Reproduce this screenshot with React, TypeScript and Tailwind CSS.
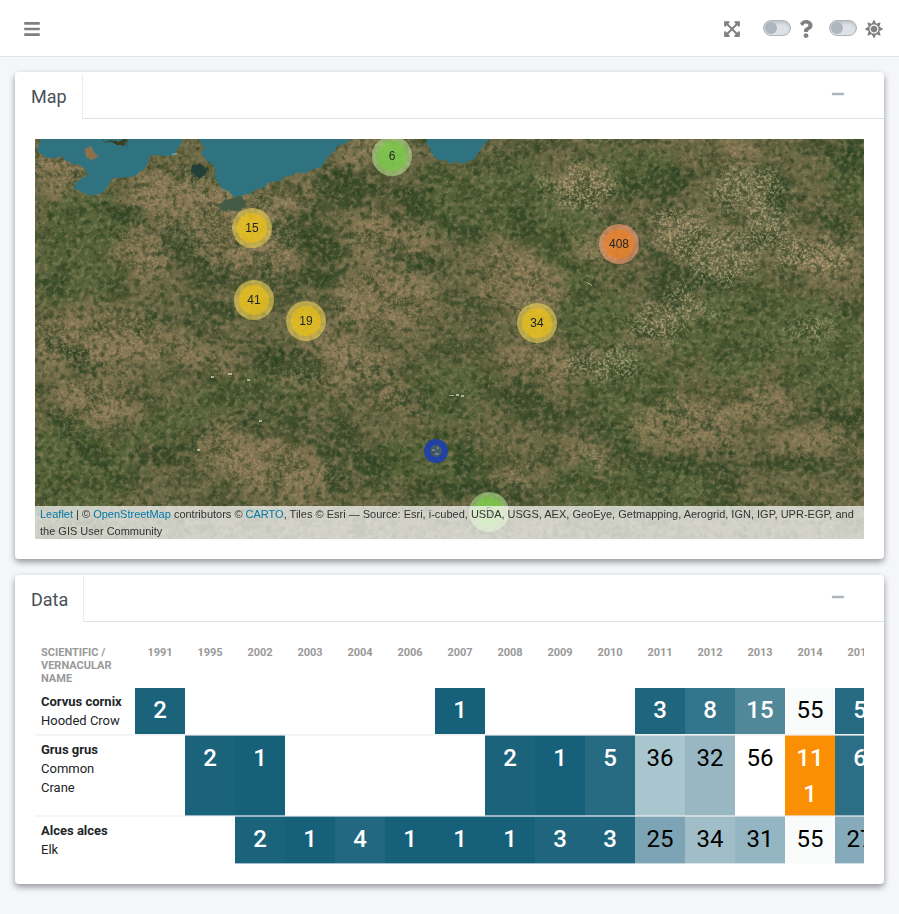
import React from "react";
import { FaBars, FaExpandArrowsAlt, FaMinus, FaQuestion, FaSun } from "react-icons/fa";

type Size = "small" | "medium" | "large";
type Blob = [number, number, number, number, number];

const clusters: { count: number; x: number; y: number; size: Size }[] = [
  { count: 6, x: 357, y: 17, size: "small" },
  { count: 15, x: 217, y: 89, size: "medium" },
  { count: 41, x: 219, y: 161, size: "medium" },
  { count: 19, x: 271, y: 182, size: "medium" },
  { count: 34, x: 502, y: 184, size: "medium" },
  { count: 408, x: 584, y: 105, size: "large" },
  { count: 5, x: 454, y: 373, size: "small" },
];

const ringClass: Record<Size, string> = {
  small: "bg-[rgba(181,226,140,0.6)]",
  medium: "bg-[rgba(241,211,87,0.6)]",
  large: "bg-[rgba(253,156,115,0.6)]",
};

const discClass: Record<Size, string> = {
  small: "bg-[rgba(110,204,57,0.6)]",
  medium: "bg-[rgba(240,194,12,0.6)]",
  large: "bg-[rgba(241,128,23,0.6)]",
};

// Terrain patches: centre x, centre y, radius x, radius y, rotation.
const fields: Blob[] = [
  [20, 30, 34, 26, 10], [140, 60, 48, 34, 20], [190, 100, 42, 34, 30], [170, 50, 34, 20, 20],
  [240, 110, 26, 30, 0], [338, 95, 24, 24, 0], [378, 98, 18, 18, 0], [240, 60, 44, 14, -15],
  [350, 160, 54, 34, 0], [330, 12, 26, 12, -30], [110, 115, 30, 24, 20], [60, 200, 70, 30, 0],
  [60, 265, 44, 26, 10], [140, 210, 60, 12, 15], [240, 330, 60, 26, 10], [320, 220, 50, 18, 25],
  [350, 250, 40, 12, 30], [485, 140, 46, 30, 20], [560, 110, 30, 12, 10], [640, 90, 20, 16, 0],
  [550, 40, 30, 16, 0], [500, 225, 40, 14, 10], [650, 285, 54, 26, 0], [730, 265, 34, 16, 0],
  [770, 300, 44, 10, 0], [480, 335, 24, 12, -10], [790, 120, 34, 20, 20], [700, 10, 20, 12, 0],
  [180, 300, 30, 14, -20], [560, 315, 30, 8, 20], [280, 240, 40, 10, 10],
];

const woods: Blob[] = [
  [155, 35, 9, 8, 0], [310, 50, 30, 20, 10], [262, 95, 28, 16, 10], [290, 108, 24, 12, 20],
  [380, 66, 20, 16, 40], [367, 95, 4, 22, 0], [150, 110, 34, 15, 40], [175, 130, 34, 10, 20],
  [90, 78, 34, 5, 15], [235, 138, 18, 7, -10], [280, 140, 32, 9, -8], [375, 122, 36, 7, 10],
  [25, 208, 14, 10, 20], [48, 222, 20, 9, 15], [30, 285, 24, 7, 42], [60, 315, 22, 10, 35],
  [250, 226, 36, 13, 10], [265, 285, 24, 9, 20], [220, 280, 28, 8, -10], [130, 315, 36, 8, -15],
  [170, 296, 30, 4, -28], [310, 298, 30, 7, 52], [334, 325, 26, 12, 45], [295, 325, 9, 26, -15],
  [470, 20, 12, 6, -10], [610, 45, 30, 10, -10], [640, 50, 22, 8, -50], [745, 55, 16, 18, 20],
  [490, 80, 18, 12, 30], [620, 115, 16, 10, 30], [632, 148, 18, 16, 0], [660, 140, 36, 8, 20],
  [488, 257, 18, 16, 20], [510, 270, 24, 6, 10], [430, 165, 26, 5, 20], [635, 272, 14, 9, 0],
  [665, 284, 24, 5, 20], [660, 325, 46, 8, 6], [690, 345, 18, 8, 10], [620, 345, 22, 7, 35],
  [766, 325, 48, 5, 2], [800, 275, 32, 8, 25],
  [345, 240, 28, 8, 28], [380, 262, 24, 6, 30], [555, 290, 30, 4, 10], [580, 305, 24, 5, 40],
  [432, 320, 12, 18, 0], [440, 350, 60, 9, 0], [815, 20, 18, 16, 0], [800, 90, 24, 8, 40],
  [15, 145, 20, 9, 0], [120, 180, 28, 7, 12], [175, 170, 24, 10, 15], [430, 90, 20, 8, 20],
];

const greens: Blob[] = [
  [50, 90, 44, 44, 0], [30, 140, 56, 24, 0], [405, 60, 22, 40, -15], [470, 60, 60, 40, 0],
  [540, 110, 40, 40, 0], [590, 30, 50, 20, 0], [600, 260, 50, 50, 0], [560, 180, 40, 30, 0],
  [740, 170, 80, 24, 10], [800, 215, 50, 50, 0], [690, 200, 60, 30, 0], [600, 350, 90, 30, 0],
  [400, 325, 60, 30, 0], [820, 40, 24, 50, 0], [40, 330, 60, 50, 0], [150, 280, 60, 20, -20],
  [420, 250, 40, 30, 0], [230, 250, 60, 16, 0], [700, 225, 30, 24, 10], [800, 230, 40, 32, 10],
];

const brightFields: Blob[] = [
  [640, 90, 24, 24, 30], [680, 115, 46, 30, 20], [735, 90, 26, 24, 40], [755, 115, 20, 20, 0],
  [625, 185, 34, 22, 0], [660, 165, 34, 10, 20], [710, 50, 40, 24, 0], [545, 50, 36, 24, 0],
  [775, 190, 34, 10, 0], [560, 322, 22, 7, 30], [570, 225, 40, 18, 0], [800, 120, 28, 18, 10],
];

function Patches({ items, fill }: { items: Blob[]; fill: string }) {
  return (
    <>
      {items.map(([x, y, rx, ry, turn], i) => (
        <ellipse key={i} cx={x} cy={y} rx={rx} ry={ry} fill={fill} transform={`rotate(${turn} ${x} ${y})`} />
      ))}
    </>
  );
}

function SatelliteImage() {
  return (
    <svg className="block h-full w-full" viewBox="0 0 829 400" preserveAspectRatio="xMidYMid slice" aria-hidden="true">
      <defs>
        <filter id="soft" x="0" y="0" width="829" height="400" filterUnits="userSpaceOnUse" colorInterpolationFilters="sRGB">
          <feTurbulence type="fractalNoise" baseFrequency="0.07" numOctaves="5" seed="4" result="n" />
          <feDisplacementMap in="SourceGraphic" in2="n" scale="60" xChannelSelector="R" yChannelSelector="G" />
          <feGaussianBlur stdDeviation="4" />
        </filter>
        <filter id="rough" x="0" y="0" width="829" height="400" filterUnits="userSpaceOnUse" colorInterpolationFilters="sRGB">
          <feTurbulence type="fractalNoise" baseFrequency="0.11" numOctaves="4" seed="4" result="n" />
          <feDisplacementMap in="SourceGraphic" in2="n" scale="44" xChannelSelector="R" yChannelSelector="G" />
          <feGaussianBlur stdDeviation="1" />
        </filter>
        <filter id="coast" x="0" y="0" width="829" height="400" filterUnits="userSpaceOnUse" colorInterpolationFilters="sRGB">
          <feTurbulence type="fractalNoise" baseFrequency="0.12" numOctaves="3" seed="9" result="n" />
          <feDisplacementMap in="SourceGraphic" in2="n" scale="7" xChannelSelector="R" yChannelSelector="G" />
        </filter>
        <filter id="speckled" x="0" y="0" width="829" height="400" filterUnits="userSpaceOnUse" colorInterpolationFilters="sRGB">
          <feTurbulence type="fractalNoise" baseFrequency="0.07" numOctaves="4" seed="12" result="n" />
          <feDisplacementMap in="SourceGraphic" in2="n" scale="50" xChannelSelector="R" yChannelSelector="G" result="d" />
          <feGaussianBlur in="d" stdDeviation="4" result="b" />
          <feTurbulence type="fractalNoise" baseFrequency="0.38" numOctaves="3" seed="31" />
          <feColorMatrix values="0 0 0 0 1  0 0 0 0 1  0 0 0 0 1  5 0 0 0 -2.3" result="s" />
          <feComposite in="b" in2="s" operator="in" />
        </filter>
        <filter id="grainLight" x="0" y="0" width="829" height="400" filterUnits="userSpaceOnUse" colorInterpolationFilters="sRGB">
          <feTurbulence type="fractalNoise" baseFrequency="0.22" numOctaves="4" seed="2" />
          <feColorMatrix values="0 0 0 0 0.64  0 0 0 0 0.57  0 0 0 0 0.43  4 0 0 0 -1.9" />
        </filter>
        <filter id="grainDark" x="0" y="0" width="829" height="400" filterUnits="userSpaceOnUse" colorInterpolationFilters="sRGB">
          <feTurbulence type="fractalNoise" baseFrequency="0.16" numOctaves="5" seed="17" />
          <feColorMatrix values="0 0 0 0 0.15  0 0 0 0 0.24  0 0 0 0 0.12  0 4 0 0 -1.9" />
        </filter>
        <filter id="mottle" x="0" y="0" width="829" height="400" filterUnits="userSpaceOnUse" colorInterpolationFilters="sRGB">
          <feTurbulence type="fractalNoise" baseFrequency="0.03 0.045" numOctaves="6" seed="23" />
          <feColorMatrix values="0 0 0 0 0.2  0 0 0 0 0.27  0 0 0 0 0.13  0 5 0 0 -2.4" />
        </filter>
      </defs>
      <rect width="829" height="400" fill="#6b6845" />
      <g filter="url(#soft)" opacity="0.6">
        <Patches items={greens} fill="#4b6334" />
      </g>
      <g filter="url(#soft)" opacity="0.6">
        <Patches items={fields} fill="#927e5a" />
      </g>
      <rect width="829" height="400" filter="url(#mottle)" opacity="0.5" />
      <g filter="url(#rough)" opacity="0.75">
        <Patches items={woods} fill="#304626" />
      </g>
      <g filter="url(#coast)" fill="none" stroke="#414b2c" strokeWidth="2" opacity="0.7">
        <path d="M450 155 L485 172 L510 178 L545 187 L575 205 L590 235" />
        <path d="M85 345 L110 322 L155 302 L182 282 L205 272" />
        <path d="M728 275 L722 230 L745 200 L785 190 L829 195" stroke="#6b7445" />
      </g>
      <g filter="url(#speckled)" opacity="0.6">
        <Patches items={brightFields} fill="#c7c19c" />
      </g>
      <g filter="url(#speckled)" opacity="0.45">
        <Patches items={fields} fill="#b99c78" />
      </g>
      <rect width="829" height="400" filter="url(#grainDark)" opacity="0.55" />
      <rect width="829" height="400" filter="url(#grainLight)" opacity="0.4" />
      <g filter="url(#coast)">
        <path
          fill="#2f7380"
          d="M4 -8 L4 14 L12 19 L25 18 L36 25 L50 29 L52 36 L42 42 L40 50 L52 56 L66 55 L72 46 L80 40 L101 37 L110 28 L116 16 L138 17 L144 6 L152 -8 Z"
        />
        <path
          fill="#2f7380"
          d="M156 -8 L170 8 L167 16 L174 22 L182 31 L180 40 L190 50 L200 59 L212 55 L242 42 L284 28 L292 20 L302 10 L326 -8 Z"
        />
        <path fill="#2f7380" d="M391 -8 L395 14 L404 21 L418 25 Q444 24 458 -8 Z" />
        <path fill="#39401f" d="M68 0 L78 2 L92 0 L91 7 L80 5 Z" />
        <path fill="#8a704b" d="M49 10 L58 9 L63 17 L58 20 L53 19 Z" />
        <path fill="#243f37" d="M156 27 L164 23 L172 32 L166 39 L157 36 Z" />
        <path fill="#435a45" d="M180 64 L195 60 L206 58 L212 68 L190 73 Z" />
      </g>
      <g fill="#dfd8c6" opacity="0.7">
        <path d="M414 256h5v1h-5zM421 255h3v2h-3zM426 256h3v2h-3z" />
        <path d="M193 234h4v2h-4zM212 240h3v2h-3zM176 237h3v2h-3zM224 281h3v2h-3zM162 310h3v2h-3z" />
        <path d="M552 143l5 3v1l-5 -3zM137 15l5 -1v1l-5 1z" />
      </g>
      <circle cx="401" cy="312" r="9" fill="#3b5870" fillOpacity="0.75" stroke="#1d3fae" strokeOpacity="0.9" strokeWidth="6" />
      <path d="M397 310h3v2h-3zM402 308h2v2h-2zM400 314h4v2h-4z" fill="#73808a" />
    </svg>
  );
}

const linkClass = "text-[#0078a8]";

function SpeciesMap() {
  return (
    <div className="relative h-[400px] overflow-hidden font-['Liberation_Sans',Arial,sans-serif]">
      <SatelliteImage />
      {clusters.map((c) => (
        <button
          key={c.count}
          type="button"
          className={`absolute flex size-10 -translate-x-1/2 -translate-y-1/2 items-center justify-center rounded-full ${ringClass[c.size]}`}
          style={{ left: c.x, top: c.y }}
        >
          <span className={`flex size-[30px] items-center justify-center rounded-full text-xs text-[#212529] ${discClass[c.size]}`}>
            {c.count}
          </span>
        </button>
      ))}
      <div className="absolute inset-x-0 bottom-0 bg-white/70 px-[5px] text-[11px] leading-normal text-[#333]">
        <a href="#leaflet" className={linkClass}>Leaflet</a> | © <a href="#osm" className={linkClass}>OpenStreetMap</a>
        {" contributors © "}
        <a href="#carto" className={linkClass}>CARTO</a>
        , Tiles © Esri — Source: Esri, i-cubed, USDA, USGS, AEX, GeoEye, Getmapping, Aerogrid, IGN, IGP, UPR-EGP, and the GIS User Community
      </div>
    </div>
  );
}

const years = [1991, 1995, 2002, 2003, 2004, 2006, 2007, 2008, 2009, 2010, 2011, 2012, 2013, 2014, 2015];

const species: { name: string; common: string; counts: (number | null)[] }[] = [
  { name: "Corvus cornix", common: "Hooded Crow", counts: [2, null, null, null, null, null, 1, null, null, null, 3, 8, 15, 55, 5] },
  { name: "Grus grus", common: "Common Crane", counts: [null, 2, 1, null, null, null, null, 2, 1, 5, 36, 32, 56, 111, 6] },
  { name: "Alces alces", common: "Elk", counts: [null, null, 2, 1, 4, 1, 1, 1, 3, 3, 25, 34, 31, 55, 27] },
];

const heat: Record<number, string> = {
  1: "bg-[#17607a] font-medium text-white",
  2: "bg-[#1b627b] font-medium text-white",
  3: "bg-[#1f657e] font-medium text-white",
  4: "bg-[#236881] font-medium text-white",
  5: "bg-[#276b83] font-medium text-white",
  6: "bg-[#2b6e85] font-medium text-white",
  8: "bg-[#33758a] font-medium text-white",
  15: "bg-[#50889a] font-medium text-white",
  25: "bg-[#7ca4b5] text-black",
  27: "bg-[#85abba] text-black",
  31: "bg-[#94b5c2] text-black",
  32: "bg-[#99b7c3] text-black",
  34: "bg-[#a1bdc8] text-black",
  36: "bg-[#a9c5ce] text-black",
  55: "bg-[#fafcfc] text-black",
  56: "bg-white text-black",
  111: "bg-[#fb8f04] font-medium text-white",
};

const rowLines = ["border-b border-[#f0f0f0]", "border-y border-[#f0f0f0]/60", "border-y border-t-[#f0f0f0]/60 border-b-white/60"];

function SpeciesTable() {
  return (
    <div className="overflow-x-auto [scrollbar-width:none]">
      <table className="w-[850px] table-fixed border-separate border-spacing-0">
        <thead>
          <tr className="align-top text-[11px] leading-[13px] font-bold text-[#999]">
            <th scope="col" className="w-[100px] px-1.5 pt-1 pb-[3px] text-left uppercase">Scientific / Vernacular Name</th>
            {years.map((y) => (
              <th key={y} scope="col" className="w-[50px] px-1.5 pt-1 pb-[3px] text-center">{y}</th>
            ))}
          </tr>
        </thead>
        <tbody>
          {species.map((s, row) => (
            <tr key={s.name} className="align-top">
              <th scope="row" className={`px-1.5 py-1 text-left text-[13px] leading-[19px] font-normal text-[#212529] ${rowLines[row]}`}>
                <span className="block font-bold whitespace-nowrap">{s.name}</span>
                <span className="block">{s.common}</span>
              </th>
              {s.counts.map((n, i) => (
                <td key={years[i]} className={`px-1.5 pt-1 pb-[3px] text-center text-2xl leading-9 break-all ${rowLines[row]} ${n === null ? "" : heat[n]}`}>
                  {n}
                </td>
              ))}
            </tr>
          ))}
        </tbody>
      </table>
    </div>
  );
}

function Card({ title, children }: { title: string; children: React.ReactNode }) {
  return (
    <section className="rounded bg-white shadow-[0_3px_6px_rgba(0,0,0,0.4)]">
      <header className="flex h-[47px] items-stretch pt-0.5">
        <h2 className="flex items-center border-r border-[#e9ecef] pt-px pr-[15px] pl-4 text-lg text-[#495057]">{title}</h2>
        <div className="flex grow items-start justify-end border-b border-[#dee2e6] pr-[39px]">
          <button type="button" aria-label={`Collapse ${title}`} className="pt-[13px] text-sm text-[#adb5bd]">
            <FaMinus />
          </button>
        </div>
      </header>
      <div className="p-5">{children}</div>
    </section>
  );
}

function Switch({ label }: { label: string }) {
  return (
    <input
      type="checkbox"
      aria-label={label}
      className="flex h-4 w-7 appearance-none items-center rounded-full border border-[#adb5bd] bg-[#dee2e6] shadow-[inset_0_2px_3px_rgba(0,0,0,0.15)] before:ml-px before:size-3 before:rounded-full before:bg-[#adb5bd] checked:before:ml-[13px]"
    />
  );
}

export default function App() {
  return (
    <div className="min-h-screen bg-[#f4f6fa] font-[Roboto,sans-serif]">
      <nav className="flex h-[57px] items-center border-b border-[#dee2e6] bg-white pr-4 pl-[23px] text-[18px] text-[#808080]">
        <button type="button" aria-label="Menu" className="pt-0.5">
          <FaBars />
        </button>
        <div className="ml-auto flex items-center">
          <button type="button" aria-label="Fullscreen" className="mr-[22px] pt-0.5">
            <FaExpandArrowsAlt />
          </button>
          <Switch label="Help" />
          <FaQuestion className="mt-0.5 mr-3.5 ml-1.5" />
          <Switch label="Light theme" />
          <FaSun className="mt-0.5 ml-2" />
        </div>
      </nav>
      <main className="flex flex-col gap-4 p-[15px]">
        <Card title="Map">
          <SpeciesMap />
        </Card>
        <Card title="Data">
          <SpeciesTable />
        </Card>
      </main>
    </div>
  );
}
